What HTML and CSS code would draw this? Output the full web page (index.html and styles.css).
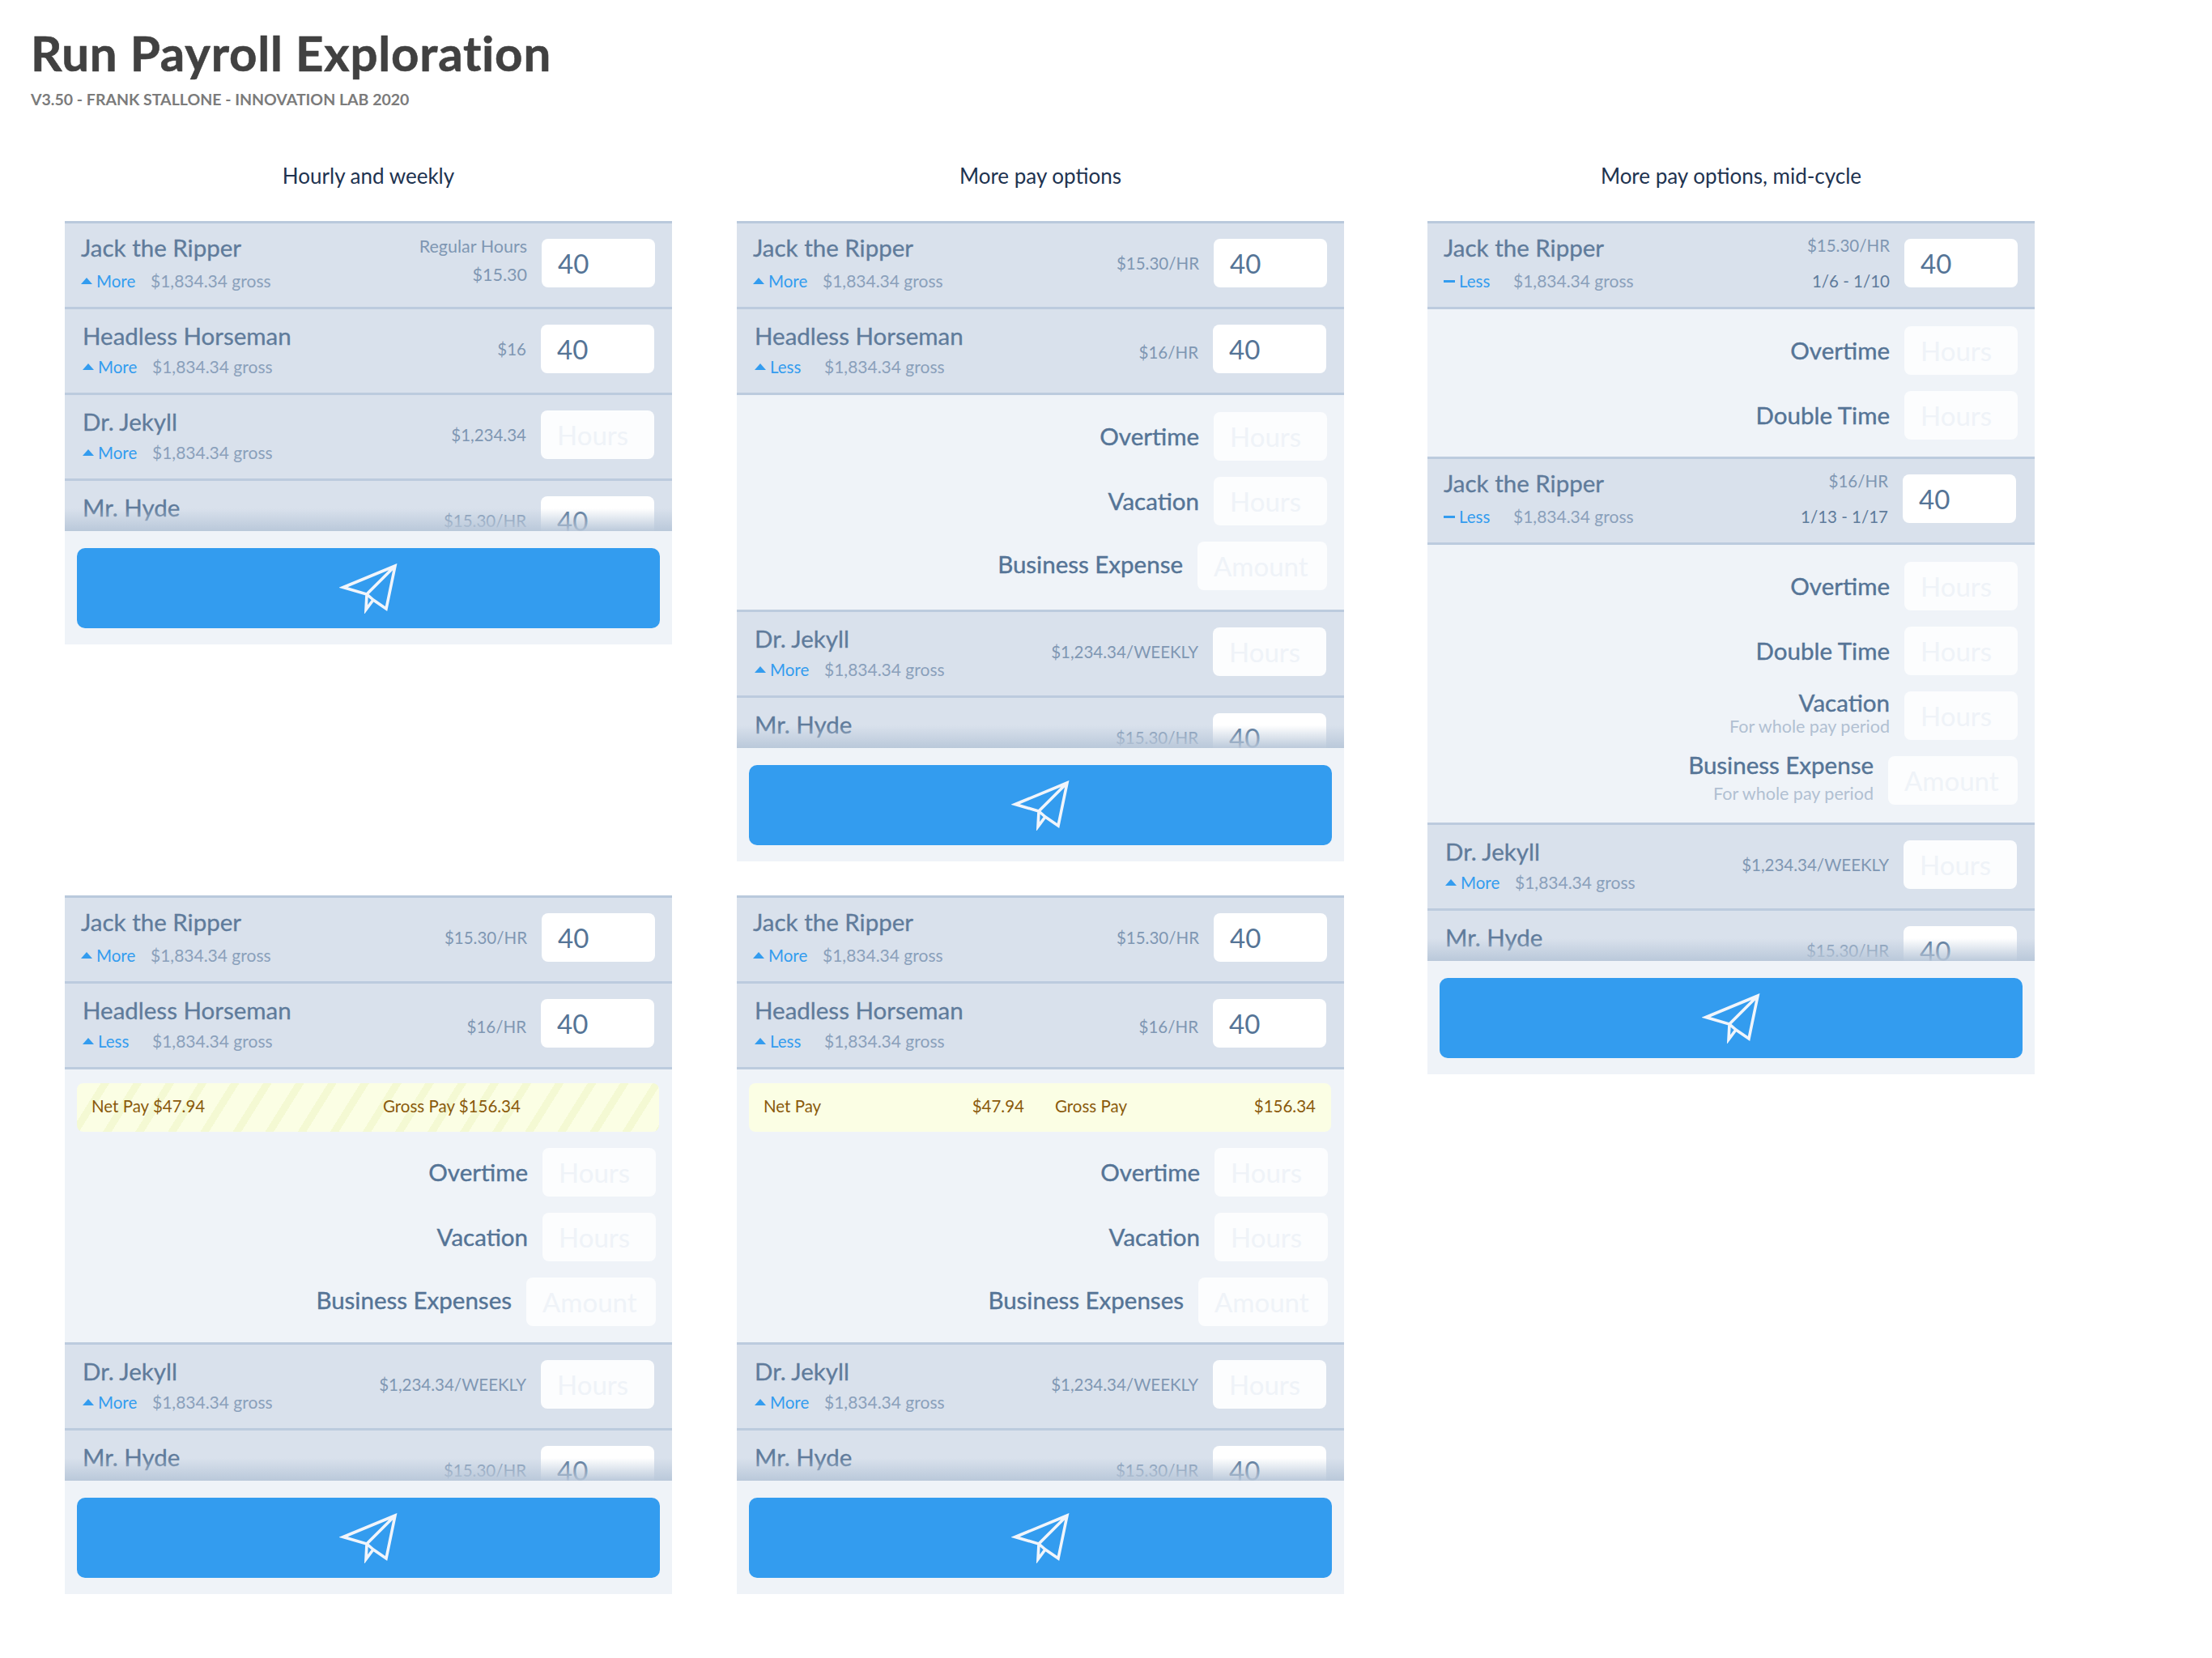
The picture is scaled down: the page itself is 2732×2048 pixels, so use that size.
FILE: index.html
```html
<!DOCTYPE html>
<html lang="en">
<head>
  <meta charset="UTF-8">
  <title>Run Payroll Exploration</title>
  <link rel="stylesheet" href="styles.css">
</head>
<body>
  <svg class="defs" width="0" height="0">
    <symbol id="plane" viewBox="0 0 72 62">
      <path d="M69 3 L5 29.500 L34 38 L33 57 L42 45 L58 56 Z M69 3 L34 38 L42 45" fill="none" stroke="#f1f5fb" stroke-width="3.600"/>
    </symbol>
  </svg>

  <header class="top">
    <h1>Run Payroll Exploration</h1>
    <p>V3.50 - FRANK STALLONE - INNOVATION LAB 2020</p>
  </header>

  <main class="board">
    <!-- hourly and weekly -->
    <section class="col">
      <h2>Hourly and weekly</h2>
      <div class="panel">
        <div class="row row-first">
          <div class="who"><div class="name">Jack the Ripper</div><div class="sub"><span class="toggle"><i class="tri"></i>More</span><span class="gross">$1,834.34 gross</span></div></div>
          <div class="rate rate-up"><div class="rate-top">Regular Hours</div><div>$15.30</div></div>
          <div class="field">40</div>
        </div>
        <div class="row">
          <div class="who"><div class="name">Headless Horseman</div><div class="sub"><span class="toggle"><i class="tri"></i>More</span><span class="gross">$1,834.34 gross</span></div></div>
          <div class="rate">$16</div>
          <div class="field">40</div>
        </div>
        <div class="row">
          <div class="who"><div class="name">Dr. Jekyll</div><div class="sub"><span class="toggle"><i class="tri"></i>More</span><span class="gross">$1,834.34 gross</span></div></div>
          <div class="rate">$1,234.34</div>
          <div class="field empty">Hours</div>
        </div>
        <div class="cut">
          <div class="row">
            <div class="who"><div class="name">Mr. Hyde</div></div>
            <div class="rate">$15.30/HR</div>
            <div class="field">40</div>
          </div>
        </div>
        <div class="foot"><button class="send"><svg class="plane"><use href="#plane"/></svg></button></div>
      </div>
    </section>

    <!-- more pay options -->
    <section class="col">
      <h2>More pay options</h2>
      <div class="panel">
        <div class="row row-first">
          <div class="who"><div class="name">Jack the Ripper</div><div class="sub"><span class="toggle"><i class="tri"></i>More</span><span class="gross">$1,834.34 gross</span></div></div>
          <div class="rate">$15.30/HR</div>
          <div class="field">40</div>
        </div>
        <div class="row">
          <div class="who"><div class="name">Headless Horseman</div><div class="sub"><span class="toggle"><i class="tri"></i>Less</span><span class="gross">$1,834.34 gross</span></div></div>
          <div class="rate rate-low">$16/HR</div>
          <div class="field">40</div>
        </div>
        <div class="extra">
          <div class="line"><span class="label">Overtime</span><div class="field empty">Hours</div></div>
          <div class="line"><span class="label">Vacation</span><div class="field empty">Hours</div></div>
          <div class="line line-up"><span class="label">Business Expense</span><div class="field empty wide">Amount</div></div>
        </div>
        <div class="row">
          <div class="who"><div class="name">Dr. Jekyll</div><div class="sub"><span class="toggle"><i class="tri"></i>More</span><span class="gross">$1,834.34 gross</span></div></div>
          <div class="rate">$1,234.34/WEEKLY</div>
          <div class="field empty">Hours</div>
        </div>
        <div class="cut">
          <div class="row">
            <div class="who"><div class="name">Mr. Hyde</div></div>
            <div class="rate">$15.30/HR</div>
            <div class="field">40</div>
          </div>
        </div>
        <div class="foot"><button class="send"><svg class="plane"><use href="#plane"/></svg></button></div>
      </div>
    </section>

    <!-- mid-cycle -->
    <section class="col col-tall">
      <h2>More pay options, mid-cycle</h2>
      <div class="panel">
        <div class="row row-first">
          <div class="who"><div class="name">Jack the Ripper</div><div class="sub"><span class="toggle"><i class="dash"></i>Less</span><span class="gross">$1,834.34 gross</span></div></div>
          <div class="rate rate-split"><div class="rate-top">$15.30/HR</div><div class="dates">1/6 - 1/10</div></div>
          <div class="field">40</div>
        </div>
        <div class="extra extra-short">
          <div class="line"><span class="label">Overtime</span><div class="field empty">Hours</div></div>
          <div class="line"><span class="label">Double Time</span><div class="field empty">Hours</div></div>
        </div>
        <div class="row row-first">
          <div class="who"><div class="name">Jack the Ripper</div><div class="sub"><span class="toggle"><i class="dash"></i>Less</span><span class="gross">$1,834.34 gross</span></div></div>
          <div class="rate rate-split"><div class="rate-top">$16/HR</div><div class="dates">1/13 - 1/17</div></div>
          <div class="field field-left">40</div>
        </div>
        <div class="extra extra-long">
          <div class="line"><span class="label">Overtime</span><div class="field empty">Hours</div></div>
          <div class="line"><span class="label">Double Time</span><div class="field empty">Hours</div></div>
          <div class="line"><span class="label label-note">Vacation<small>For whole pay period</small></span><div class="field empty">Hours</div></div>
          <div class="line"><span class="label label-note label-gap">Business Expense<small>For whole pay period</small></span><div class="field empty wide">Amount</div></div>
        </div>
        <div class="row">
          <div class="who"><div class="name">Dr. Jekyll</div><div class="sub"><span class="toggle"><i class="tri"></i>More</span><span class="gross">$1,834.34 gross</span></div></div>
          <div class="rate">$1,234.34/WEEKLY</div>
          <div class="field empty">Hours</div>
        </div>
        <div class="cut">
          <div class="row">
            <div class="who"><div class="name">Mr. Hyde</div></div>
            <div class="rate">$15.30/HR</div>
            <div class="field">40</div>
          </div>
        </div>
        <div class="foot"><button class="send"><svg class="plane"><use href="#plane"/></svg></button></div>
      </div>
    </section>

    <!-- with pay preview, striped -->
    <section class="col">
      <div class="panel">
        <div class="row row-first">
          <div class="who"><div class="name">Jack the Ripper</div><div class="sub"><span class="toggle"><i class="tri"></i>More</span><span class="gross">$1,834.34 gross</span></div></div>
          <div class="rate">$15.30/HR</div>
          <div class="field">40</div>
        </div>
        <div class="row">
          <div class="who"><div class="name">Headless Horseman</div><div class="sub"><span class="toggle"><i class="tri"></i>Less</span><span class="gross">$1,834.34 gross</span></div></div>
          <div class="rate rate-low">$16/HR</div>
          <div class="field">40</div>
        </div>
        <div class="extra extra-pay">
          <div class="pay pay-striped"><span>Net Pay $47.94</span><span>Gross Pay $156.34</span></div>
          <div class="line"><span class="label">Overtime</span><div class="field empty">Hours</div></div>
          <div class="line"><span class="label">Vacation</span><div class="field empty">Hours</div></div>
          <div class="line line-up"><span class="label">Business Expenses</span><div class="field empty wide">Amount</div></div>
        </div>
        <div class="row">
          <div class="who"><div class="name">Dr. Jekyll</div><div class="sub"><span class="toggle"><i class="tri"></i>More</span><span class="gross">$1,834.34 gross</span></div></div>
          <div class="rate">$1,234.34/WEEKLY</div>
          <div class="field empty">Hours</div>
        </div>
        <div class="cut">
          <div class="row">
            <div class="who"><div class="name">Mr. Hyde</div></div>
            <div class="rate">$15.30/HR</div>
            <div class="field">40</div>
          </div>
        </div>
        <div class="foot"><button class="send"><svg class="plane"><use href="#plane"/></svg></button></div>
      </div>
    </section>

    <!-- with pay preview, plain -->
    <section class="col">
      <div class="panel">
        <div class="row row-first">
          <div class="who"><div class="name">Jack the Ripper</div><div class="sub"><span class="toggle"><i class="tri"></i>More</span><span class="gross">$1,834.34 gross</span></div></div>
          <div class="rate">$15.30/HR</div>
          <div class="field">40</div>
        </div>
        <div class="row">
          <div class="who"><div class="name">Headless Horseman</div><div class="sub"><span class="toggle"><i class="tri"></i>Less</span><span class="gross">$1,834.34 gross</span></div></div>
          <div class="rate rate-low">$16/HR</div>
          <div class="field">40</div>
        </div>
        <div class="extra extra-pay">
          <div class="pay">
            <span class="pay-cell"><span>Net Pay</span><span>$47.94</span></span>
            <span class="pay-cell"><span>Gross Pay</span><span>$156.34</span></span>
          </div>
          <div class="line"><span class="label">Overtime</span><div class="field empty">Hours</div></div>
          <div class="line"><span class="label">Vacation</span><div class="field empty">Hours</div></div>
          <div class="line line-up"><span class="label">Business Expenses</span><div class="field empty wide">Amount</div></div>
        </div>
        <div class="row">
          <div class="who"><div class="name">Dr. Jekyll</div><div class="sub"><span class="toggle"><i class="tri"></i>More</span><span class="gross">$1,834.34 gross</span></div></div>
          <div class="rate">$1,234.34/WEEKLY</div>
          <div class="field empty">Hours</div>
        </div>
        <div class="cut">
          <div class="row">
            <div class="who"><div class="name">Mr. Hyde</div></div>
            <div class="rate">$15.30/HR</div>
            <div class="field">40</div>
          </div>
        </div>
        <div class="foot"><button class="send"><svg class="plane"><use href="#plane"/></svg></button></div>
      </div>
    </section>
  </main>
</body>
</html>
```

FILE: styles.css
```css
body { margin: 0; background: #fff; font-family: Lato, "Open Sans", sans-serif; color: #557496; }
.defs { display: block; height: 0; }

.top { padding: 30px 0 0 38px; height: 156px; box-sizing: border-box; }
.top h1 { margin: 0; font-size: 60px; line-height: 70px; font-weight: 700; color: #414141; letter-spacing: 0.8px; -webkit-text-stroke: 0.6px #414141; }
.top p { margin: 11px 0 0; font-size: 19.500px; line-height: 24px; font-weight: 700; color: #7b7b7b; }

.board { display: grid; grid-template-columns: 750px 750px 750px; column-gap: 80px; row-gap: 42px; padding-left: 80px; align-items: start; }
.col h2 { margin: 0 0 33px; height: 84px; padding-top: 44px; box-sizing: border-box; font-size: 26px; line-height: 34px; font-weight: 400; text-align: center; color: #1e3350; }
.col-tall { grid-column: 3; grid-row: 1 / span 2; width: 750px; margin-left: 23px; }

.panel { background: #eff3f8; border-top: 3px solid #b9c9dc; }

.row { display: flex; align-items: center; height: 98px; padding: 0 22px 5px 22px; gap: 18px; background: #d9e1ec; border-bottom: 3px solid #bccbde; }
.row-first { padding-left: 20px; padding-right: 21px; }
.who { flex: 1; height: 72px; margin-bottom: 4px; min-width: 0; }
.name { padding-top: 4px; font-size: 29.500px; line-height: 36px; color: #5f7b9b; -webkit-text-stroke: 0.3px #5f7b9b; }
.row-first .name { padding-top: 1px; }
.sub { display: flex; align-items: center; margin-top: 8px; font-size: 20.500px; line-height: 24px; }
.row-first .sub { margin-top: 11px; }
.toggle { display: flex; align-items: center; width: 86px; color: #339cef; }
.tri { width: 0; height: 0; margin-right: 5px; border-left: 7px solid transparent; border-right: 7px solid transparent; border-bottom: 8px solid #339cef; }
.dash { width: 14px; height: 3px; margin-right: 5px; background: #339cef; }
.gross { font-size: 21px; color: #8aa0bb; }
.rate { font-size: 20.500px; line-height: 24px; color: #7f97b3; text-align: right; white-space: nowrap; }
.rate-top { margin-bottom: 11px; }
.rate-up { margin-bottom: 7px; font-size: 21.500px; }
.rate-low { margin-top: 8px; }
.rate-split .rate-top { margin-bottom: 20px; }
.dates { color: #5f7b9b; }

.field { flex: none; box-sizing: border-box; width: 140px; height: 60px; padding-left: 20px; border-radius: 8px; background: #fff; font-size: 33px; line-height: 60px; color: #557496; }
.field.empty { background: #fcfdfe; color: #eff3f8; }
.field.wide { width: 160px; }
.field-left { margin-right: 2px; }

.extra { display: flex; flex-direction: column; gap: 20px; padding: 21px 21px 24px 15px; border-bottom: 3px solid #bccbde; }
.extra-short { padding: 21px 21px 21px 15px; }
.extra-long { padding: 21px 21px 22px 15px; }
.extra-pay { padding: 17px 16px 20px 15px; }
.extra-pay .line { margin-right: 4px; }
.line { display: flex; justify-content: flex-end; align-items: center; gap: 18px; height: 60px; }
.line-up .label { margin-bottom: 4px; }
.label { font-size: 29.500px; line-height: 34px; font-weight: 400; color: #557496; text-align: right; -webkit-text-stroke: 0.4px #557496; }
.label small { display: block; font-size: 21.500px; line-height: 24px; font-weight: 400; color: #b1c0d2; -webkit-text-stroke: 0; }
.label-note { margin-bottom: 8px; }
.label-gap { margin-bottom: 9px; }
.label-gap small { margin-top: 6px; }

.pay { display: grid; grid-template-columns: 322px 322px; column-gap: 38px; box-sizing: border-box; height: 60px; padding: 0 18px; border-radius: 8px; background: #fbfee4; font-size: 20.500px; line-height: 57px; color: #8a5a0c; }
.pay-striped { background: repeating-linear-gradient(122deg, #fbfee4 0, #fbfee4 25px, #f4f9d3 25px, #f4f9d3 34px); }
.pay-cell { display: flex; justify-content: space-between; }

.cut { position: relative; height: 62px; overflow: hidden; }
.cut::after { content: ""; position: absolute; left: 0; right: 0; bottom: 0; height: 28px; background: linear-gradient(rgba(184, 199, 217, 0), rgba(184, 199, 217, 0.95)); }

.foot { padding: 21px 15px 20px; }
.send { display: flex; align-items: center; justify-content: center; width: 100%; height: 99px; border: 0; border-radius: 10px; background: #339cef; }
.plane { width: 72px; height: 62px; }
```
